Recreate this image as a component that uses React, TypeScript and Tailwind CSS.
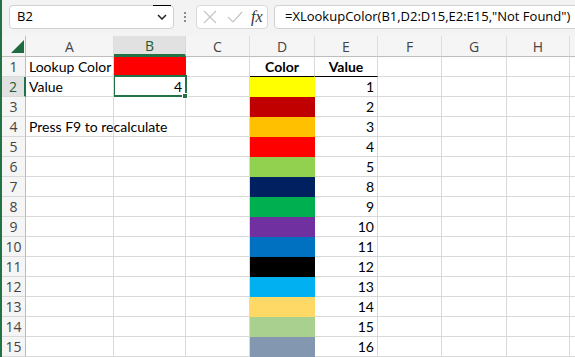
import React from 'react';

const cols = [
  { key: 'A', w: 'w-[88px]' },
  { key: 'B', w: 'w-[72px]' },
  { key: 'C', w: 'w-[64px]' },
  { key: 'D', w: 'w-[65px]' },
  { key: 'E', w: 'w-[63px]' },
  { key: 'F', w: 'w-[64px]' },
  { key: 'G', w: 'w-[65px]' },
  { key: 'H', w: 'w-[63px]' },
  { key: '', w: 'w-[64px]' },
];

// lookup table in D2:E15
const table = [
  { fill: 'bg-[#ffff00] border-[#ffff00]', v: 1 },
  { fill: 'bg-[#c00000] border-[#c00000]', v: 2 },
  { fill: 'bg-[#ffc000] border-[#ffc000]', v: 3 },
  { fill: 'bg-[#ff0000] border-[#ff0000]', v: 4 },
  { fill: 'bg-[#92d050] border-[#92d050]', v: 5 },
  { fill: 'bg-[#002060] border-[#002060]', v: 8 },
  { fill: 'bg-[#00b050] border-[#00b050]', v: 9 },
  { fill: 'bg-[#7030a0] border-[#7030a0]', v: 10 },
  { fill: 'bg-[#0070c0] border-[#0070c0]', v: 11 },
  { fill: 'bg-[#000000] border-[#000000]', v: 12 },
  { fill: 'bg-[#00b0f0] border-[#00b0f0]', v: 13 },
  { fill: 'bg-[#ffd966] border-[#ffd966]', v: 14 },
  { fill: 'bg-[#a9d08e] border-[#a9d08e]', v: 15 },
  { fill: 'bg-[#8497b0] border-[#8497b0]', v: 16 },
];

const cellFont = { fontFamily: 'Lato, "Liberation Sans", sans-serif' };

function Cell({ row, col }: { row: number; col: number }) {
  const w = cols[col].w;
  const base = `${w} h-[20px] shrink-0 border-r border-b border-[#d9d9d9] px-[3px] flex items-center text-[14px] text-black`;

  if (col === 0) {
    const text = row === 1 ? 'Lookup Color' : row === 2 ? 'Value' : row === 4 ? 'Press F9 to recalculate' : '';
    return <div className={`${base} whitespace-nowrap overflow-visible relative z-10`}>{text}</div>;
  }
  if (col === 1 && row === 1) {
    return <div className={`${w} h-[20px] shrink-0 border-r border-b bg-[#ff0000] border-[#ff0000]`} />;
  }
  if (col === 1 && row === 2) {
    return (
      <div className={`${base} justify-end relative`}>
        4
        <div className="absolute -left-[1px] -top-[2px] w-[74px] h-[22px] border-2 border-[#217346]" />
        <div className="absolute -right-[3px] -bottom-[3px] w-[6px] h-[6px] bg-[#217346] border border-white" />
      </div>
    );
  }
  if (col === 3 && row === 1) {
    return <div className={`${w} h-[20px] shrink-0 border-r border-b border-b-black border-r-[#d9d9d9] flex items-center justify-center font-bold text-[14px]`}>Color</div>;
  }
  if (col === 4 && row === 1) {
    return <div className={`${w} h-[20px] shrink-0 border-r border-b border-b-black border-r-[#d9d9d9] flex items-center justify-center font-bold text-[14px]`}>Value</div>;
  }
  if (col === 3 && row >= 2) {
    return <div className={`${w} h-[20px] shrink-0 border-r border-b ${table[row - 2].fill}`} />;
  }
  if (col === 4 && row >= 2) {
    return <div className={`${base} justify-end`}>{table[row - 2].v}</div>;
  }
  return <div className={base} />;
}

export default function App() {
  const rows = Array.from({ length: 15 }, (_, i) => i + 1);
  return (
    <div className="w-[575px] h-[357px] overflow-hidden bg-white border-l-2 border-[#217346] flex flex-col" style={{ fontFamily: '"Open Sans", "Noto Sans", sans-serif' }}>
      {/* formula bar */}
      <div className="h-[36px] shrink-0 bg-[#f3f3f3] flex items-start pt-[5px] pl-[7px] overflow-hidden">
        <div className="relative w-[165px] h-[24px] shrink-0 bg-white border border-[#d1d1d1] rounded-[4px] flex items-center pl-[7px] text-[13px] text-black">
          B2
          <div className="absolute top-[-1px] right-[2px] w-[18px] h-[1px] bg-black" />
          <svg className="absolute right-[6px] top-[8px]" width="10" height="6" viewBox="0 0 10 6">
            <path d="M1 1 L5 5 L9 1" fill="none" stroke="#222" strokeWidth="1.5" />
          </svg>
        </div>
        <div className="w-[22px] h-[24px] shrink-0 flex flex-col items-center justify-center gap-[2px]">
          <div className="w-[2px] h-[2px] bg-[#8a8a8a]" />
          <div className="w-[2px] h-[2px] bg-[#8a8a8a]" />
          <div className="w-[2px] h-[2px] bg-[#8a8a8a]" />
        </div>
        <div className="w-[72px] h-[24px] shrink-0 bg-white border border-[#d9d9d9] rounded-[4px] flex items-center pl-[6px]">
          <svg width="14" height="14" viewBox="0 0 14 14">
            <path d="M1 1 L13 13 M13 1 L1 13" stroke="#c4c4c4" strokeWidth="1.2" />
          </svg>
          <svg className="ml-[10px]" width="16" height="12" viewBox="0 0 16 12">
            <path d="M1 6 L6 11 L15 1" fill="none" stroke="#c4c4c4" strokeWidth="1.2" />
          </svg>
          <span className="ml-[8px] text-[16px] italic text-[#333] leading-none" style={{ fontFamily: '"Liberation Serif", serif' }}>fx</span>
        </div>
        <div className="ml-[6px] w-[320px] h-[24px] shrink-0 bg-white border border-[#d1d1d1] rounded-[4px] flex items-center pl-[10px] text-[13px] text-black whitespace-nowrap">
          =XLookupColor(B1,D2:D15,E2:E15,"Not Found")
        </div>
      </div>

      {/* column headers */}
      <div className="flex h-[21px] shrink-0 text-[14px] text-[#444]">
        <div className="w-[24px] h-[21px] shrink-0 bg-[#f5f5f5] border-r border-b border-[#bdbdbd] relative">
          <svg className="absolute left-[9px] top-[4px]" width="13" height="13" viewBox="0 0 13 13">
            <path d="M13 0 L13 13 L0 13 Z" fill="#1e6b41" />
          </svg>
        </div>
        {cols.map((c, i) =>
          i === 1 ? (
            <div key={i} className={`${c.w} h-[21px] shrink-0 bg-[#e1e1e1] border-r border-[#d9d9d9] border-b-[3px] border-b-[#217346] flex items-center justify-center text-[#1e5d33]`}>
              {c.key}
            </div>
          ) : (
            <div key={i} className={`${c.w} h-[21px] shrink-0 bg-[#f5f5f5] border-r border-[#dedede] border-b border-b-[#bdbdbd] flex items-center justify-center`}>
              {c.key}
            </div>
          )
        )}
      </div>

      {/* rows */}
      {rows.map((r) => (
        <div key={r} className="flex h-[20px] shrink-0" style={cellFont}>
          {r === 2 ? (
            <div className="w-[24px] h-[20px] shrink-0 bg-[#e1e1e1] border-b border-[#d9d9d9] border-r-2 border-r-[#217346] flex items-center justify-center text-[14px] text-[#1e5d33]" style={{ fontFamily: '"Open Sans", sans-serif' }}>
              {r}
            </div>
          ) : (
            <div className="w-[24px] h-[20px] shrink-0 bg-[#f5f5f5] border-b border-[#d9d9d9] border-r border-r-[#bdbdbd] flex items-center justify-center text-[14px] text-[#444]" style={{ fontFamily: '"Open Sans", sans-serif' }}>
              {r}
            </div>
          )}
          {cols.map((c, ci) => (
            <Cell key={ci} row={r} col={ci} />
          ))}
        </div>
      ))}
    </div>
  );
}
